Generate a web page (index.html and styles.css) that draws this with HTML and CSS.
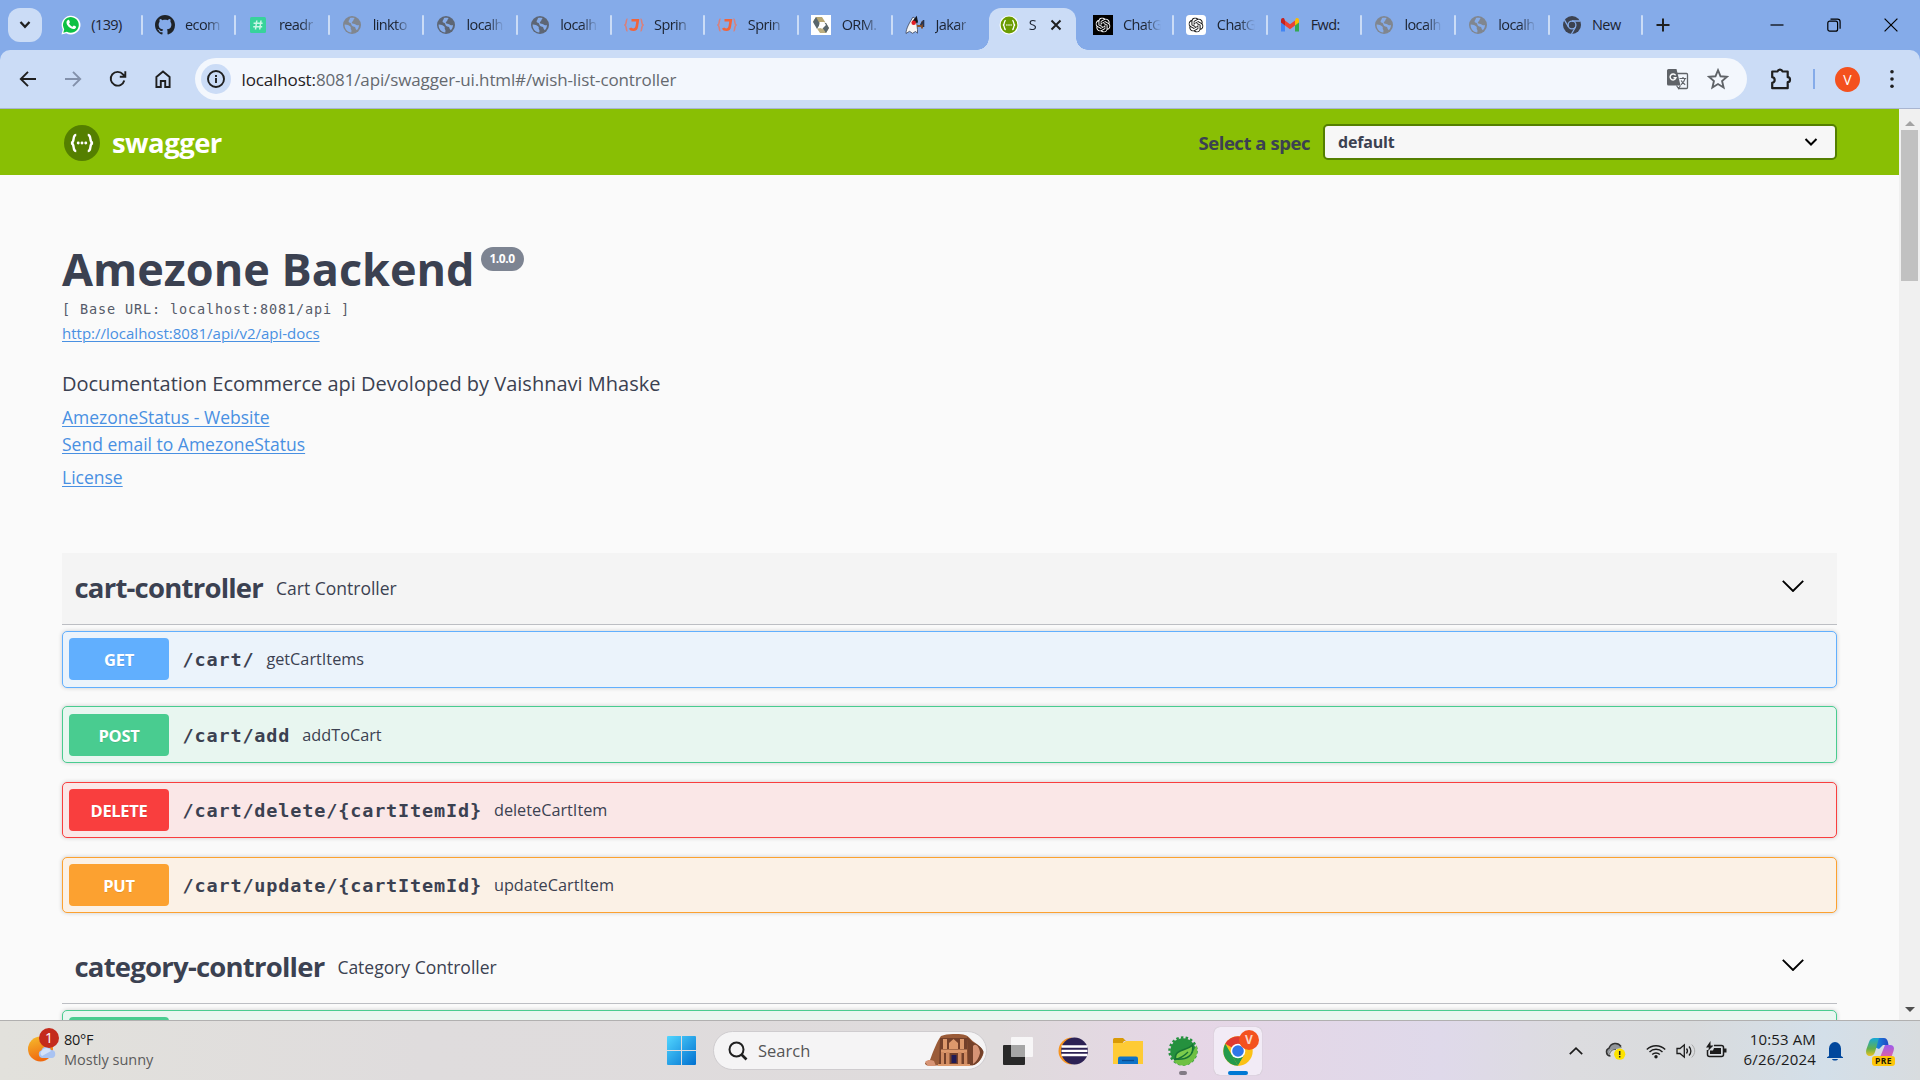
FILE: index.html
```html
<!DOCTYPE html>
<html lang="en">
<head>
<meta charset="utf-8">
<title>Swagger UI</title>
<link rel="stylesheet" href="styles.css">
</head>
<body>
<svg class="defs" aria-hidden="true">
  <defs>
    <symbol id="globe" viewBox="0 0 20 20">
      <circle cx="10" cy="10" r="9" fill="currentColor"/>
      <path d="M2.6 9.6C4.6 9.4 7 10.4 8.3 11.6c1.2 1.2-.2 2 .8 3 .8.9.2 2 .2 2.9C5.2 17.200 2.400 13.800 2.600 9.600zM8 3.100c1.600-.5 3.300-.4 4.500.1-.2 1.100-1.500 1.300-1.200 2.300.2 1-1.700.9-1.500 2.200.3 1.300 2.700.8 3.800 1.900 1 .9 2.100.5 3.300.3.100 2-.8 4-2.200 5.300-.6-1-1.300-1.500-1.400-2.700-.1-1.100-1.800-.6-3-1.500-1.300-1-.6-2.500-1.800-3.100-.8-.4-1.700-.2-1.900-1.200C6.400 5.600 7.900 4.600 8 3.100z" fill="#86ace9"/>
    </symbol>
    <symbol id="baeldung" viewBox="0 0 20 20">
      <path d="M3.500 4C1.800 4 2.700 9.500 1 10c1.700.5.800 6 2.500 6M16.500 4c1.700 0 .8 5.500 2.500 6-1.700.5-.8 6-2.500 6" fill="none" stroke="#d9807c" stroke-width="1.600"/>
      <path d="M7.500 5.200h6.300l-1 6.300c-.4 2.500-1.600 3.200-3.400 3.200-1.600 0-2.900-.5-3.400-1.500" fill="none" stroke="#f0643c" stroke-width="2.600"/>
    </symbol>
    <symbol id="braces" viewBox="0 0 20 20">
      <path d="M6.800 5.500C4.300 5.500 6.400 9.400 4 10c2.400.6.300 4.500 2.800 4.500M13.200 5.500c2.500 0 .4 3.900 2.800 4.500-2.400.6-.3 4.500-2.800 4.500" fill="none" stroke="#fff" stroke-width="1.300"/>
      <g fill="#fff"><circle cx="7.900" cy="10" r=".8"/><circle cx="10" cy="10" r=".8"/><circle cx="12.100" cy="10" r=".8"/></g>
    </symbol>
    <symbol id="knot" viewBox="0 0 24 24">
      <path fill="currentColor" d="M22.282 9.821a5.985 5.985 0 0 0-.516-4.910 6.046 6.046 0 0 0-6.510-2.900A6.065 6.065 0 0 0 4.981 4.182a5.985 5.985 0 0 0-3.998 2.900 6.046 6.046 0 0 0 .743 7.097 5.980 5.980 0 0 0 .510 4.911 6.051 6.051 0 0 0 6.515 2.900A5.985 5.985 0 0 0 13.260 24a6.056 6.056 0 0 0 5.772-4.206 5.990 5.990 0 0 0 3.998-2.900 6.056 6.056 0 0 0-.748-7.073zM13.260 22.430a4.476 4.476 0 0 1-2.876-1.040l.142-.081 4.778-2.758a.795.795 0 0 0 .393-.681v-6.737l2.020 1.169a.071.071 0 0 1 .038.052v5.583a4.504 4.504 0 0 1-4.495 4.494zM3.600 18.304a4.470 4.470 0 0 1-.535-3.014l.142.085 4.783 2.759a.771.771 0 0 0 .780 0l5.843-3.369v2.332a.080.080 0 0 1-.033.062L9.740 19.950a4.500 4.500 0 0 1-6.140-1.646zM2.340 7.896a4.485 4.485 0 0 1 2.366-1.973V11.600a.766.766 0 0 0 .388.677l5.815 3.354-2.020 1.169a.076.076 0 0 1-.071 0l-4.830-2.787A4.504 4.504 0 0 1 2.340 7.872zm16.597 3.855l-5.833-3.387L15.119 7.200a.076.076 0 0 1 .071 0l4.830 2.791a4.494 4.494 0 0 1-.676 8.105v-5.678a.790.790 0 0 0-.407-.667zm2.010-3.023l-.141-.085-4.774-2.782a.776.776 0 0 0-.785 0L9.409 9.230V6.897a.066.066 0 0 1 .028-.061l4.830-2.787a4.500 4.500 0 0 1 6.680 4.660zm-12.640 4.135l-2.020-1.164a.080.080 0 0 1-.038-.057V6.075a4.500 4.500 0 0 1 7.375-3.453l-.142.080L8.704 5.460a.795.795 0 0 0-.393.681zm1.097-2.365l2.602-1.500 2.607 1.500v2.999l-2.597 1.500-2.607-1.500z"/>
    </symbol>
    <symbol id="arrow" viewBox="0 0 22 12"><path d="M.8.900 11 11 21.200.900" fill="none" stroke="#000" stroke-width="1.900"/></symbol>
    <linearGradient id="win" x2="1" y2="1"><stop stop-color="#52d6ff"/><stop offset="1" stop-color="#0070d0"/></linearGradient>
    <linearGradient id="sun" x2=".3" y2="1"><stop stop-color="#f5bd2d"/><stop offset="1" stop-color="#f06a10"/></linearGradient>
    <linearGradient id="cop" x2="1" y2="0"><stop stop-color="#1593df"/><stop offset="1" stop-color="#2147c4"/></linearGradient>
    <linearGradient id="cop2" x2="0" y2="1"><stop stop-color="#15a8d8"/><stop offset=".6" stop-color="#63b04a"/><stop offset="1" stop-color="#eec21e"/></linearGradient>
    <linearGradient id="cop3" x2="0" y2="1"><stop stop-color="#9d5cec"/><stop offset="1" stop-color="#f4648e"/></linearGradient>
  </defs>
</svg>

<header class="tabstrip">
  <button class="tab-search"><svg width="14" height="10" viewBox="0 0 14 10"><path d="M2.500 2 7 6.800 11.500 2" fill="none" stroke="#1f1f1f" stroke-width="2.300"/></svg></button>
  <div class="tabs">
    <div class="tab"><svg class="fav" viewBox="0 0 20 20"><path d="M.5 19.500 1.800 14.500A9.400 9.400 0 1 1 5.400 18.200z" fill="#fff"/><path d="M2.300 17.700 3.200 14.200A7.900 7.900 0 1 1 5.900 16.800z" fill="#0dc143"/><path d="M6.600 5.300c.7-.7 1.400-.5 1.700.3l.6 1.500c.1.600-1 1.200-.7 1.700.8 1.500 1.800 2.300 3.200 2.900.6.100 1-1.300 1.600-1.100l1.900.9c.5.400-.1 2-1.500 2.400-3.500.9-8.200-3.500-7.900-6.900.1-.7.500-1.200 1.100-1.700z" fill="#fff"/></svg><span class="tab-label whole">(139)</span></div>
    <div class="tab"><svg class="fav" viewBox="0 0 16 16"><path fill="#1f2328" d="M8 0C3.580 0 0 3.580 0 8c0 3.540 2.290 6.530 5.470 7.590.4.070.55-.17.55-.38 0-.19-.01-.82-.01-1.490-2.010.37-2.530-.49-2.690-.94-.09-.23-.48-.94-.82-1.130-.28-.15-.68-.52-.01-.53.630-.01 1.080.58 1.230.82.720 1.210 1.870.87 2.330.66.070-.52.280-.87.510-1.070-1.780-.2-3.640-.89-3.640-3.950 0-.87.310-1.590.82-2.150-.08-.2-.36-1.020.08-2.120 0 0 .67-.21 2.200.82.640-.18 1.320-.27 2-.27s1.360.09 2 .27c1.530-1.040 2.200-.82 2.200-.82.440 1.100.16 1.920.08 2.120.51.560.82 1.270.82 2.150 0 3.070-1.870 3.750-3.650 3.950.29.250.54.730.54 1.480 0 1.070-.01 1.930-.01 2.200 0 .21.15.46.55.38A8.010 8.010 0 0 0 16 8c0-4.420-3.580-8-8-8z"/></svg><span class="tab-label">ecom</span></div>
    <div class="tab"><svg class="fav" viewBox="0 0 20 20"><rect x="2" y="2" width="16" height="16" rx="1.500" fill="#37d39b"/><path d="M8.800 5.500 7.500 14.500M13 5.500 11.700 14.500M5.600 8.300h9M5.200 11.700h9" stroke="#c9f7e6" stroke-width="1.500"/></svg><span class="tab-label">readr</span></div>
    <div class="tab"><svg class="fav grey" viewBox="0 0 20 20"><use href="#globe"/></svg><span class="tab-label">linkto</span></div>
    <div class="tab"><svg class="fav slate" viewBox="0 0 20 20"><use href="#globe"/></svg><span class="tab-label">localh</span></div>
    <div class="tab"><svg class="fav slate" viewBox="0 0 20 20"><use href="#globe"/></svg><span class="tab-label">localh</span></div>
    <div class="tab"><svg class="fav" viewBox="0 0 20 20"><use href="#baeldung"/></svg><span class="tab-label">Sprin</span></div>
    <div class="tab"><svg class="fav" viewBox="0 0 20 20"><use href="#baeldung"/></svg><span class="tab-label">Sprin</span></div>
    <div class="tab"><svg class="fav" viewBox="0 0 20 20"><path d="M0 0h20v20H0z" fill="#fff"/><path d="M5 2h6l3.500 5.500h-6L6 10 2 6.500z" fill="#b7a672"/><path d="M5 2 9 9l-3 5-4-7z" fill="#59666c"/><path d="M9 18h6l3-5-3-5-4 5-5 .5z" fill="#bcae7f"/><path d="M11.500 8h3.500l3 5-3 5-4-6z" fill="#59666c"/><path d="M9 7h4l2 3-4 4-3-3z" fill="#fff"/></svg><span class="tab-label">ORM.</span></div>
    <div class="tab no-sep"><svg class="fav" viewBox="0 0 20 20"><path d="M8 2C5 7 1 13 1 18.500l3.500-2.200 3 2 3-1.800 2 1.700C13 13 11 9 12 5z" fill="#f5f5f5" stroke="#39425a" stroke-width=".8"/><path d="M7 6.500 11.800.8 13 7.500l-6 1z" fill="#16161c"/><circle cx="8.700" cy="7.700" r="2.300" fill="#e01b24"/><path d="M12 11h5M17 6.500v7" stroke="#8a5128" stroke-width="2"/><path d="M18.500 5v7M15.500 10l3-4" stroke="#26324e" stroke-width="1.600"/></svg><span class="tab-label">Jakar</span></div>
    <div class="tab active"><svg class="fav" viewBox="0 0 20 20"><circle cx="10" cy="10" r="9.500" fill="#fff"/><circle cx="10" cy="10" r="8.400" fill="#6b9c00"/><use href="#braces"/></svg><span class="tab-label">S</span><svg class="tab-close" viewBox="0 0 12 12"><path d="m1.500 1.500 9 9m0-9-9 9" stroke="#1f1f1f" stroke-width="2"/></svg></div>
    <div class="tab"><svg class="fav white" viewBox="0 0 20 20"><path d="M0 0h20v20H0z" fill="#000"/><use href="#knot" x="2.500" y="2.500" width="15" height="15"/></svg><span class="tab-label">ChatG</span></div>
    <div class="tab"><svg class="fav black" viewBox="0 0 20 20"><rect width="20" height="20" rx="3.500" fill="#fff"/><use href="#knot" x="2.500" y="2.500" width="15" height="15"/></svg><span class="tab-label">ChatG</span></div>
    <div class="tab"><svg class="fav" viewBox="0 0 20 20"><path d="M1 5v11.500h4V9z" fill="#4285f4"/><path d="M19 5v11.500h-4V9z" fill="#34a853"/><path d="M15 5.500v5L19 7.500V5c0-2-2-2.600-3.200-1.600z" fill="#fbbc04"/><path d="M5 10.500v-5l5 3.800 5-3.800v5l-5 3.800z" fill="#ea4335"/><path d="M1 5v2.500l4 3v-5L4.200 3.400C3 2.400 1 3 1 5z" fill="#c5221f"/></svg><span class="tab-label whole">Fwd:</span></div>
    <div class="tab"><svg class="fav grey" viewBox="0 0 20 20"><use href="#globe"/></svg><span class="tab-label">localh</span></div>
    <div class="tab"><svg class="fav grey" viewBox="0 0 20 20"><use href="#globe"/></svg><span class="tab-label">localh</span></div>
    <div class="tab"><svg class="fav" viewBox="0 0 20 20"><circle cx="10" cy="10" r="9" fill="#3c4250"/><circle cx="10" cy="10" r="3.900" fill="none" stroke="#86ace9" stroke-width="1.300"/><path d="M10 6h8M6.500 12 2.500 5.200M13.500 12l-4 7" stroke="#86ace9" stroke-width="1.300"/></svg><span class="tab-label whole">New</span></div>
  </div>
  <svg class="new-tab" viewBox="0 0 14 14"><path d="M7 .5v13M.5 7h13" stroke="#1f1f1f" stroke-width="2"/></svg>
  <div class="window-buttons">
    <svg width="14" height="14" viewBox="0 0 14 14"><path d="M.5 7h13" stroke="#000" stroke-width="1.200"/></svg>
    <svg width="14" height="14" viewBox="0 0 14 14"><rect x=".8" y="3.200" width="9.800" height="10" rx="2" fill="none" stroke="#000" stroke-width="1.200"/><path d="M3.500 1.200h7a2.600 2.600 0 0 1 2.600 2.600v7" fill="none" stroke="#000" stroke-width="1.200"/></svg>
    <svg width="14" height="14" viewBox="0 0 14 14"><path d="m.6.600 12.800 12.800m0-12.800L.6 13.400" stroke="#000" stroke-width="1.200"/></svg>
  </div>
</header>

<nav class="toolbar">
  <div class="nav-buttons">
    <svg viewBox="0 0 20 20"><path d="M18 10H3M10 2.800 2.800 10l7.200 7.200" fill="none" stroke="#1f1f1f" stroke-width="1.900"/></svg>
    <svg viewBox="0 0 20 20"><path d="M2 10h15M10 2.800l7.200 7.200-7.200 7.200" fill="none" stroke="#8391ab" stroke-width="1.900"/></svg>
    <svg viewBox="0 0 20 20"><path d="M16.300 11.500A6.900 6.900 0 1 1 15 5.400L17 7.500M17.300 2.200v5.500h-5.500" fill="none" stroke="#1f1f1f" stroke-width="1.900"/></svg>
    <svg viewBox="0 0 20 20"><path d="M3.400 18V8L10 2.600 16.600 8v10h-4.400v-6H7.800v6z" fill="none" stroke="#1f1f1f" stroke-width="1.900"/></svg>
  </div>
  <div class="omnibox">
    <span class="site-info"><svg width="20" height="20" viewBox="0 0 20 20"><circle cx="10" cy="10" r="8" fill="none" stroke="#1f1f1f" stroke-width="1.900"/><path d="M10 9v5M10 6v2" stroke="#1f1f1f" stroke-width="1.900"/></svg></span>
    <span class="url"><b>localhost:</b>8081/api/swagger-ui.html#/wish-list-controller</span>
    <svg class="translate" viewBox="0 0 22 22"><path d="M9 5.500h10.500a1 1 0 0 1 1 1v13a1 1 0 0 1-1 1H11" fill="none" stroke="#5f6368" stroke-width="1.300"/><path d="M1.500 1h8l4 16.500h-12A1.500 1.500 0 0 1 0 16V2.500A1.500 1.500 0 0 1 1.500 1z" fill="#5f6368"/><path d="M8.600 7.300A3 3 0 1 0 9 9.700H6.500" fill="none" stroke="#fff" stroke-width="1.400"/><path d="M12.500 10.500h6.700M16 9v1.500M18 10.700c-.7 3-2.200 4.600-4 6M14.200 12.500c1 2 2.400 3.200 4 4.200M9.500 17.500l2 3 2-3" fill="none" stroke="#5f6368" stroke-width="1.200"/></svg>
    <svg class="star" viewBox="0 0 20 20"><path d="m10 2 2.300 5.500 5.900.5-4.500 3.900 1.400 5.800L10 14.600l-5.100 3.100 1.400-5.800L1.800 8l5.900-.5z" fill="none" stroke="#5f6368" stroke-width="1.700"/></svg>
  </div>
  <svg class="extensions" viewBox="0 0 22 24"><path d="M2.200 4.500h5.300a2.600 2.500 0 0 1 5 0h5.200v5.700a2.300 2.500 0 0 1 0 5v6H2.200v-5.400c3.300-.6 3.300-5 0-5.600z" fill="none" stroke="#1f1f1f" stroke-width="2.200" stroke-linejoin="round"/></svg>
  <span class="divider"></span>
  <span class="avatar">V</span>
  <svg class="kebab" viewBox="0 0 4 20"><g fill="#1f1f1f"><circle cx="2" cy="2" r="2"/><circle cx="2" cy="10" r="2"/><circle cx="2" cy="18" r="2"/></g></svg>
</nav>

<div class="viewport">
  <main class="page">
    <div class="topbar">
      <svg class="logo" viewBox="0 0 20 20"><circle cx="10" cy="10" r="10" fill="#547f00"/><use href="#braces"/></svg>
      <span class="brand">swagger</span>
      <span class="spec-label">Select a spec</span>
      <div class="spec-select"><span>default</span><svg width="14" height="10" viewBox="0 0 14 10"><path d="m1.500 2 5.500 5.500L12.500 2" fill="none" stroke="#000" stroke-width="2"/></svg></div>
    </div>

    <section class="info">
      <div class="title-row"><h1>Amezone Backend</h1><span class="version">1.0.0</span></div>
      <pre class="base-url">[ Base URL: localhost:8081/api ]</pre>
      <a class="docs-link">http://localhost:8081/api/v2/api-docs</a>
      <p class="description">Documentation Ecommerce api Devoloped by Vaishnavi Mhaske</p>
      <a class="info-link website">AmezoneStatus - Website</a>
      <a class="info-link email">Send email to AmezoneStatus</a>
      <a class="info-link license">License</a>
    </section>

    <section class="group">
      <div class="group-head hovered"><h2>cart-controller</h2><span class="group-desc">Cart Controller</span><svg class="chev"><use href="#arrow"/></svg></div>
      <div class="op get"><span class="method">GET</span><code>/cart/</code><span class="op-desc">getCartItems</span></div>
      <div class="op post"><span class="method">POST</span><code>/cart/add</code><span class="op-desc">addToCart</span></div>
      <div class="op delete"><span class="method">DELETE</span><code>/cart/delete/{cartItemId}</code><span class="op-desc">deleteCartItem</span></div>
      <div class="op put"><span class="method">PUT</span><code>/cart/update/{cartItemId}</code><span class="op-desc">updateCartItem</span></div>
    </section>
    <section class="group">
      <div class="group-head"><h2>category-controller</h2><span class="group-desc">Category Controller</span><svg class="chev"><use href="#arrow"/></svg></div>
      <div class="op post"><span class="method"></span></div>
    </section>
  </main>
  <aside class="scrollbar">
    <svg viewBox="0 0 10 5"><path d="M0 5 5 0l5 5z" fill="#a3a3a3"/></svg>
    <span class="thumb"></span>
    <svg viewBox="0 0 10 5"><path d="M0 0l5 5 5-5z" fill="#505050"/></svg>
  </aside>
</div>

<footer class="taskbar">
  <div class="weather">
    <svg width="28" height="34" viewBox="0 0 28 34"><circle cx="12.500" cy="20" r="12.500" fill="url(#sun)"/><path d="M14 29a4 4 0 0 1-.5-7.700A5 5 0 0 1 23 21a4 4 0 0 1 .5 8z" fill="#a9c3f2"/><path d="M14 27a4 3.500 0 0 1 0-5.500A5 5 0 0 1 23 22z" fill="#d3e2fb"/></svg>
    <span class="count">1</span>
    <div class="weather-text"><span class="temp">80°F</span><span class="cond">Mostly sunny</span></div>
  </div>
  <div class="apps">
    <svg class="win" viewBox="0 0 29 29"><path fill="url(#win)" d="M1 0h13v14H0V1a1 1 0 0 1 1-1zM15 0h13a1 1 0 0 1 1 1v13H15zM0 15h14v14H1a1 1 0 0 1-1-1zM15 15h14v13a1 1 0 0 1-1 1H15z"/></svg>
    <div class="search">
      <svg width="20" height="20" viewBox="0 0 20 20"><circle cx="8.500" cy="8.500" r="7" fill="none" stroke="#202020" stroke-width="2"/><path d="m13.500 13.500 5 5" stroke="#202020" stroke-width="2.600"/></svg>
      <span>Search</span>
      <svg class="petra" width="59" height="33" viewBox="0 0 59 33"><path d="M0 30c0-2 3-3 5-4 3-8 7-19 11-24 6-2.500 18-2.500 24-1 4 1 6 5 9 7 5 3 9 7 9.500 11-1 5-5 11-11 12.500H2z" fill="#9a5b38"/><path d="M42 2.500c4 4 5 5.500 8 7 3 1.500 7 4 8.500 8-1 5-4 11-9.500 13.500h-6z" fill="#74412a"/><path d="M15 4h27v27H14z" fill="#73402a"/><path d="M16 15.500h26V19H16zM18 5h4v10h-4zM24 9l4.500-4L33 9v6h-9zM35 5h4v10h-4zM13 30h32v2H13z" fill="#dd996c"/><path d="M16 18h3v12h-3zM21 18h3.500v12H21zM33 18h3.500v12H33zM39 18h3v12h-3z" fill="#d08b61"/><path d="M26.500 21h5v8h-5z" fill="#201b55"/><path d="M0 28c3-3 6-2 9-1l2 5H3zM48 12c3-4 7 2 7 7-1 5-4 9-7 11z" fill="#d79475"/></svg>
    </div>
    <svg class="app taskview" viewBox="0 0 30 30"><rect x="0" y="9" width="22" height="20" rx="1" fill="#292929"/><rect x="8" y="1" width="22" height="20" rx="1" fill="#fff" opacity=".75"/><path d="M8 9h14v12H8z" fill="#999" opacity=".75"/></svg>
    <svg class="app" viewBox="0 0 30 30"><path d="M14 1.500a13.500 13.500 0 0 0 0 27C7 24 7 6 14 1.500z" fill="#f7941e"/><circle cx="16.500" cy="15" r="13.500" fill="#2c2255"/><path d="M3.500 10.500h26M3.500 14.800h26M3.500 19h26" stroke="#fff" stroke-width="2.300"/></svg>
    <svg class="app" viewBox="0 0 30 30"><path d="M0 3.500A1.500 1.500 0 0 1 1.500 2H10l3 3h-2l-2 3H0z" fill="#d99a06"/><path d="M0 7h10l3-2h17v23H0z" fill="#fecb35"/><path d="M5 28v-5.500a2 2 0 0 1 2-2h16a2 2 0 0 1 2 2V28z" fill="#0e73c8"/><path d="M9 24.500h12" stroke="#084c91" stroke-width="1.300"/></svg>
    <span class="app running"><svg viewBox="0 0 30 30"><circle cx="15" cy="15" r="12.700" fill="#25913e"/><circle cx="15" cy="15" r="13.500" fill="none" stroke="#25913e" stroke-width="2.500" stroke-dasharray="2.500 2.200"/><path d="M28.500 9c3 9-2 18-11 20.500-5 .5-9-1-12-4.500C14 22 24 21 28.500 9z" fill="#6fc043"/><path d="M24.500 9c2 10-5 15-17 14C6 13 19 15 24.500 9z" fill="#7bcb4b" stroke="#167434" stroke-width="1.600"/><path d="M6 23.500c7-1 10-3 14-7.500" fill="none" stroke="#167434" stroke-width="1.300"/></svg><i></i></span>
    <span class="app running current"><svg viewBox="0 0 30 30"><circle cx="15" cy="15" r="14.700" fill="#fbc116"/><path d="M15 15 2.270 7.650A14.700 14.700 0 0 1 27.730 7.650z" fill="#df3a30"/><path d="M2.270 7.650 8.600 18.700 15 29.700A14.700 14.700 0 0 1 2.270 7.650z" fill="#249a4c"/><path d="m15 15 6.400 3.700-6.400 11L8 18z" fill="#249a4c"/><path d="M15 15h12.730A14.700 14.700 0 0 1 15 29.700l6.400-11z" fill="#fbc116"/><circle cx="15" cy="15" r="7.300" fill="#fff"/><circle cx="15" cy="15" r="5.800" fill="#2f77e8"/></svg><b class="profile">V</b><i></i></span>
  </div>
  <div class="tray">
    <svg class="t-up" viewBox="0 0 14 8"><path d="M.8 7.200 7 1.200l6.200 6" fill="none" stroke="#1c1c1c" stroke-width="1.700"/></svg>
    <svg class="t-cloud" viewBox="0 0 21 18"><path d="M4 6.500C7 0 14-.5 17 6l-6 1c-5 0-7 2-7.500 6C-.5 11.500.5 6.500 4 6.500z" fill="#92969a"/><path d="M5.500 14A4 4 0 0 1 4 6.300C6 .5 13 0 16 4.500" fill="none" stroke="#333" stroke-width="1.500"/><path d="M4.500 12.500C5 9 8 7 11 7.500" fill="none" stroke="#555"/><circle cx="14.700" cy="12.200" r="5.600" fill="#fde300"/><path d="M14.700 9v4M14.700 14v1.500" stroke="#222" stroke-width="1.500"/></svg>
    <svg class="t-wifi" viewBox="0 0 20 16"><g fill="none" stroke="#1c1c1c" stroke-width="1.400"><path d="M.8 6.500a13 13 0 0 1 18.400 0M3.500 9a9.200 9.200 0 0 1 13 0M6.200 11.500a5.400 5.400 0 0 1 7.600 0"/></g><circle cx="10" cy="13.800" r="1.700" fill="#1c1c1c"/></svg>
    <svg class="t-vol" viewBox="0 0 20 16"><path d="M1 5.500h3L8.300 1.800v12.400L4 10.500H1z" fill="none" stroke="#1c1c1c" stroke-width="1.300"/><path d="M10.500 5.500c1.200 1.500 1.200 3.500 0 5M13 3.500c2.500 2.600 2.500 6.400 0 9" fill="none" stroke="#1c1c1c" stroke-width="1.300"/><path d="M15.700 1.500c4 4 4 9 0 13" fill="none" stroke="#aaa"/></svg>
    <svg class="t-bat" viewBox="0 0 21 17"><path d="M8 4.500h7.500a2 2 0 0 1 2 2v7a2 2 0 0 1-2 2h-12a2 2 0 0 1-2-2V9" fill="none" stroke="#1c1c1c" stroke-width="1.500"/><path d="M8 7h7v6H4V9.500h3zM18 7.500h2.500v4H18zM4.500 0 0 6.500h3L2 10l5.500-5.500h-3z" fill="#1c1c1c"/></svg>
    <div class="clock"><span>10:53 AM</span><span>6/26/2024</span></div>
    <svg class="t-bell" viewBox="0 0 16 20"><path d="M2 15V7.500a6 6.500 0 0 1 12 0V15l2 1.200V17H0v-.8zM5 18h6c-.5 2-5.500 2-6 0z" fill="#01479c"/></svg>
    <div class="copilot"><svg viewBox="0 0 28 24"><path d="M8 1h10c3 0 4 3 4.500 7H17l-4 4-5-2z" fill="url(#cop)"/><path d="M8 1h5L9 15c-1 3-3 4-5 4-4 0-4.500-4-3.500-7l2.500-7c1-3 3-4 5-4z" fill="url(#cop2)"/><path d="M19 8h5c4 0 4.500 3 3.500 6l-2 6c-1 3-3 4-6 4h-7z" fill="url(#cop3)"/></svg><b>PRE</b></div>
  </div>
</footer>
</body>
</html>
```
FILE: styles.css
```css
* { box-sizing: border-box; }
body {
  margin: 0;
  width: 1920px;
  height: 1080px;
  overflow: hidden;
  display: flex;
  flex-direction: column;
  background: #85abe9;
  font-family: "Open Sans", sans-serif;
  color: #3b4151;
}
svg { display: block; flex: none; }
.defs { position: absolute; width: 0; height: 0; }

/* Browser tab strip */
.tabstrip { height: 50px; flex: none; display: flex; align-items: center; background: #85abe9; }
.tab-search {
  width: 34px; height: 34px; margin: 0 5.900px 0 8px; padding: 0; border: 0; border-radius: 12px;
  background: #cbdcf6; display: flex; align-items: center; justify-content: center;
}
.tabs { display: flex; height: 50px; }
.tab { position: relative; width: 93.800px; height: 50px; padding-left: 12.900px; display: flex; align-items: center; }
.tab::after { content: ""; position: absolute; right: -1px; top: 15px; width: 2px; height: 20px; border-radius: 1px; background: #cbdcf6; }
.tab.no-sep::after { display: none; }
.fav { width: 20px; height: 20px; }
.grey { color: #80868f; }
.slate { color: #5d6675; }
.white { color: #fff; }
.black { color: #111; }
.tab-label {
  margin-left: 10.500px; white-space: nowrap;
  font: 14.500px/24px "Open Sans", sans-serif; letter-spacing: -.6px; color: #1c2330;
  -webkit-mask-image: linear-gradient(90deg, #000 22px, transparent 38px);
  mask-image: linear-gradient(90deg, #000 22px, transparent 38px);
}
.tab-label.whole { -webkit-mask-image: none; mask-image: none; }
.tab.active { height: 42px; margin-top: 8px; padding-bottom: 8px; }
.tab.active::before {
  content: ""; position: absolute; left: 3.500px; top: 0; width: 86.500px; height: 42px;
  background: #cbdcf6; border-radius: 12px 12px 0 0;
}
.tab.active::after {
  left: -8.500px; right: auto; top: 30px; width: 110.500px; height: 12px; border-radius: 0;
  background:
    radial-gradient(circle at 0 0, transparent 11.500px, #cbdcf6 12px) 0 0 / 12px 12px no-repeat,
    radial-gradient(circle at 100% 0, transparent 11.500px, #cbdcf6 12px) 100% 0 / 12px 12px no-repeat;
}
.tab.active > * { position: relative; }
.tab.active .tab-label { width: 8px; margin-left: 10px; }
.tab.active .tab-close { width: 12px; height: 12px; margin-left: 13px; }
.new-tab { width: 14px; height: 14px; margin-left: 14px; }
.window-buttons { display: flex; gap: 43px; margin-left: auto; padding-right: 22px; }

/* Browser toolbar */
.toolbar {
  height: 59px; flex: none; display: flex; align-items: center; background: #cbdcf6;
  border-radius: 10px 10px 0 0; border-bottom: 1px solid #a9b5d0;
}
.nav-buttons { display: flex; gap: 25px; width: 195px; padding-left: 17.500px; }
.nav-buttons svg { width: 20px; height: 20px; }
.omnibox { width: 1552px; height: 42px; border-radius: 21px; background: #f3f7fd; display: flex; align-items: center; padding-left: 6px; }
.site-info { width: 30px; height: 30px; border-radius: 50%; background: #cbdcf6; display: flex; align-items: center; justify-content: center; }
.url { margin-left: 10.500px; font-size: 17px; letter-spacing: -.13px; color: #65696f; white-space: nowrap; }
.url b { font-weight: 400; color: #1f2023; }
.translate { width: 22px; height: 22px; margin-left: auto; }
.star { width: 22px; height: 22px; margin: 0 18px 0 18px; }
.extensions { width: 22px; height: 24px; margin-left: 23px; }
.divider { width: 2px; height: 20px; margin-left: 21px; background: #85abe9; }
.avatar { width: 25px; height: 25px; margin-left: 20px; border-radius: 50%; background: #f4511e; color: #fff; font-size: 14px; line-height: 25px; text-align: center; }
.kebab { width: 4px; height: 18px; margin-left: 30px; }

/* Page */
.viewport { height: 911px; flex: none; display: flex; overflow: hidden; background: #fafafa; }
.page { width: 1899px; height: 911px; overflow: hidden; }
.scrollbar { width: 21px; padding: 12px 0 8px; background: #f0f0f0; display: flex; flex-direction: column; align-items: center; }
.scrollbar svg { width: 10px; height: 5px; }
.thumb { width: 17px; height: 151px; margin: 4px 0 auto; background: #c1c1c1; }

.topbar { height: 66px; background: #89bf04; display: flex; align-items: center; padding: 0 62px 0 64px; }
.logo { width: 36px; height: 36px; margin-top: 2px; }
.brand { margin-left: 12px; font-weight: 700; font-size: 27.500px; letter-spacing: -.55px; color: #fff; }
.spec-label { margin-left: auto; font-weight: 700; font-size: 18.500px; letter-spacing: -.45px; margin-top: 1px; }
.spec-select {
  width: 514px; height: 36px; margin-left: 13px; padding: 0 17px 1px 13px; border: 2px solid #547f00; border-radius: 5px;
  background: #f7f7f7; display: flex; align-items: center; justify-content: space-between;
  font-weight: 700; font-size: 16px; letter-spacing: -.2px;
}

.info { height: 378px; padding: 62px 62px 0; display: flex; flex-direction: column; align-items: flex-start; }
.title-row { display: flex; height: 64px; }
h1 { margin: 0; font-size: 45px; line-height: 64px; font-weight: 700; white-space: nowrap; }
.version { height: 24px; width: 43px; margin: 10px 0 0 6px; border-radius: 12px; background: #7d8492; color: #fff; font-size: 12px; font-weight: 700; line-height: 23px; text-align: center; letter-spacing: -.4px; }
.base-url { margin: 0; font: 13.500px/17px "DejaVu Sans Mono", monospace; letter-spacing: .87px; height: 20px; color: #565b69; }
a { color: #4990e2; text-decoration: underline; text-decoration-thickness: 1px; text-underline-offset: 2px; white-space: nowrap; }
.docs-link { font-size: 15px; line-height: 24px; }
.description { margin: 24px 0 0; font-size: 20px; line-height: 30px; }
.info-link { font-size: 17.500px; line-height: 24px; }
.website { margin-top: 6px; }
.email { margin-top: 3px; }
.license { margin-top: 9px; }

.group { padding: 0 62px; margin-bottom: 18px; }
.group-head { height: 72px; padding: 0 33px 2px 12.500px; display: flex; align-items: center; border-bottom: 1px solid #bcbec3; margin-bottom: 6px; }
.group-head.hovered { background: #f4f4f4; }
h2 { margin: 0; font-size: 27.500px; font-weight: 700; letter-spacing: -.78px; white-space: nowrap; }
.group-desc { margin-left: 13px; font-size: 17.500px; }
.chev { width: 22px; height: 12px; margin-left: auto; margin-top: -4px; }
.op { height: 56.500px; margin-bottom: 18.750px; padding: 0 6px; display: flex; align-items: center; border: 1px solid; border-radius: 5px; box-shadow: 0 0 4px rgba(0,0,0,.19); }
.method { width: 100px; height: 42px; border-radius: 4px; color: #fff; font-size: 16.500px; line-height: 43px; font-weight: 700; text-align: center; letter-spacing: -.3px; text-shadow: 0 1px 0 rgba(0,0,0,.1); }
.op code { margin-left: 13.500px; padding-top: 1px; font: 700 18.500px "DejaVu Sans Mono", monospace; letter-spacing: .84px; }
.op-desc { margin-left: 12px; font-size: 16.250px; }
.get { background: #ebf3fb; border-color: #61affe; }
.get .method { background: #61affe; }
.post { background: #e8f6f0; border-color: #49cc90; }
.post .method { background: #49cc90; }
.delete { background: #fae7e7; border-color: #f93e3e; }
.delete .method { background: #f93e3e; }
.put { background: #fbf1e6; border-color: #fca130; }
.put .method { background: #fca130; }

/* Windows taskbar */
.taskbar {
  height: 60px; flex: none; display: grid; grid-template-columns: 667px 595px 1fr; border-top: 1px solid #b1b0b0;
  background: linear-gradient(90deg, #e2e1dc 0, #dfdcdd 22%, #dfdbdc 52%, #e6d6e6 62%, #dfd9ea 75%, #dcdcdf 82%, #d9dbdd 88%, #d3dfe9 95%, #d8dcdf 100%);
}
.weather { position: relative; display: flex; padding-left: 28px; }
.weather svg { margin-top: 8px; }
.count { position: absolute; left: 39px; top: 7px; width: 20px; height: 20px; border-radius: 50%; background: #c42b1c; color: #fff; font-size: 14px; line-height: 20px; text-align: center; }
.weather-text { margin: 9px 0 0 8px; display: flex; flex-direction: column; font-size: 14.500px; line-height: 20px; }
.temp { color: #1b1b1b; letter-spacing: -.3px; }
.cond { color: #5b5b5b; }
.apps { display: flex; align-items: center; }
.win { width: 29px; height: 29px; }
.search { width: 274px; height: 39px; margin-left: 17px; padding: 0 2px 0 14px; border-radius: 20px; background: #f5f4f5; border: 1px solid #cfcccf; display: flex; align-items: center; }
.search span { margin-left: 10px; font-size: 16.500px; color: #555; }
.search .petra { margin-left: auto; }
.app { width: 30px; height: 30px; margin-left: 25px; }
.app.taskview { margin-left: 16px; }
.running { position: relative; }
.running svg { width: 30px; height: 30px; position: relative; }
.running i { position: absolute; left: 11px; top: 35px; width: 8px; height: 4px; border-radius: 2px; background: #827a85; }
.current i { left: 5px; width: 20px; background: #0078d4; }
.current::before { content: ""; position: absolute; left: -9px; top: -9px; width: 48px; height: 48px; border-radius: 6px; background: #f2ebf6; box-shadow: 0 0 1px #aaa; }
.profile { position: absolute; left: 16px; top: -6px; width: 20px; height: 20px; border-radius: 50%; background: #f4511e; color: #fbd3c5; font-size: 12px; line-height: 20px; text-align: center; }
.tray { display: flex; align-items: center; }
.t-up { width: 14px; height: 8px; margin-left: 307px; }
.t-cloud { width: 21px; height: 18px; margin-left: 22px; }
.t-wifi { width: 20px; height: 16px; margin-left: 20px; }
.t-vol { width: 20px; height: 16px; margin-left: 10px; }
.t-bat { width: 21px; height: 17px; margin-left: 10px; margin-top: -3px; }
.clock { width: 89px; display: flex; flex-direction: column; text-align: right; font-size: 15px; line-height: 20px; color: #1b1b1b; letter-spacing: .15px; padding-bottom: 3px; }
.t-bell { width: 16px; height: 20px; margin-left: 11px; }
.copilot { position: relative; width: 28px; height: 28px; margin-left: 23px; }
.copilot svg { width: 28px; height: 24px; }
.copilot b { position: absolute; left: 6px; top: 19px; width: 23px; height: 10px; border-radius: 3px; background: #fdc60a; color: #201800; font-size: 8.500px; line-height: 10px; text-align: center; letter-spacing: .4px; }
```
